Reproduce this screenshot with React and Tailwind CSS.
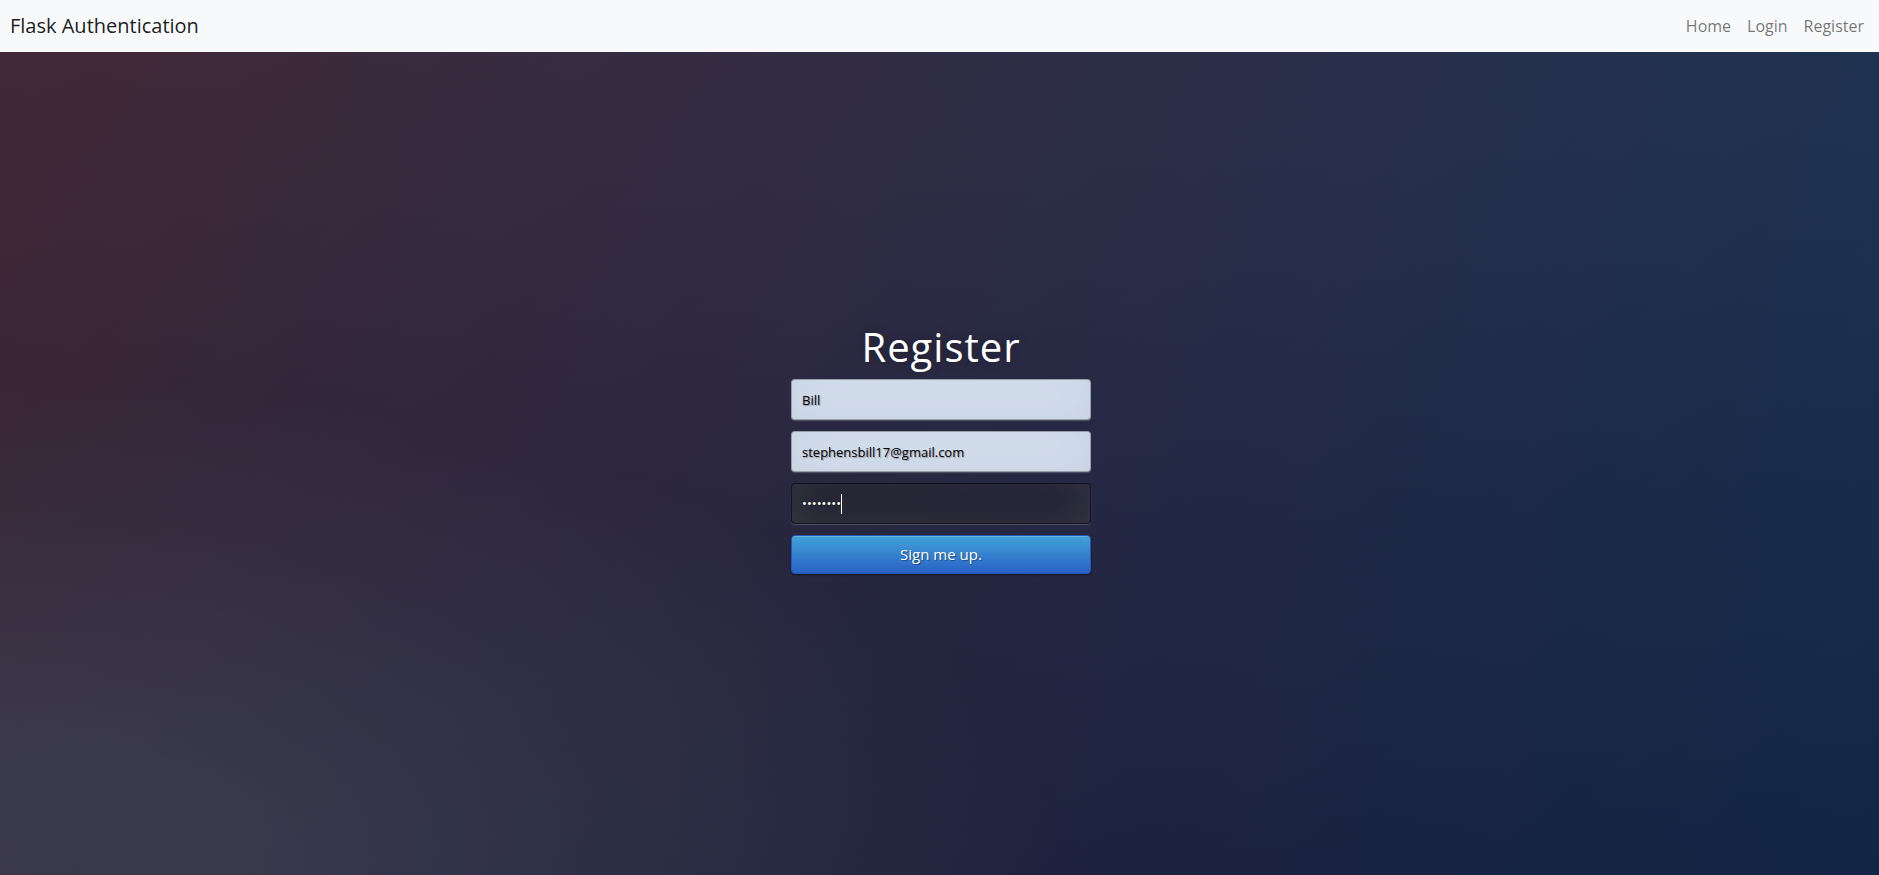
export default function App() {
  const font = { fontFamily: '"Open Sans", "Noto Sans", sans-serif' };
  return (
    <div
      className="min-h-screen flex flex-col bg-[#092756] [background-image:linear-gradient(rgba(5,12,30,.28),rgba(5,12,30,.28)),radial-gradient(ellipse_at_0%_100%,rgba(104,128,138,.4)_10%,rgba(138,114,76,0)_40%),linear-gradient(to_bottom,rgba(57,173,219,.25)_0%,rgba(42,60,87,.4)_100%),linear-gradient(135deg,#670d10_0%,#092756_100%)]"
      style={font}
    >
      <nav className="h-[52px] bg-[#f8f9fa] flex items-center justify-between pl-[10px] pr-[15px]">
        <a className="text-[20px] text-[rgba(0,0,0,0.9)] leading-[30px]">Flask Authentication</a>
        <div className="flex items-center gap-[16px] text-[16px] text-[rgba(0,0,0,0.55)]">
          <a>Home</a>
          <a>Login</a>
          <a>Register</a>
        </div>
      </nav>
      <main className="flex justify-center pt-[271px] pl-[3px]">
        <div className="w-[300px] flex flex-col">
          <h1 className="text-[40px] leading-[48px] text-white text-center tracking-[1px] mb-[8px] [text-shadow:0_0_10px_rgba(0,0,0,0.3)]">
            Register
          </h1>
          <input
            readOnly
            value="Bill"
            className="h-[41px] mb-[11px] px-[10px] rounded-[4px] border border-[rgba(0,0,0,0.3)] bg-[#d8e3f2] text-black text-[13px] outline-none shadow-[inset_0_-5px_45px_rgba(100,110,130,0.15),0_1px_1px_rgba(255,255,255,0.2)] [text-shadow:1px_1px_1px_rgba(0,0,0,0.3)]"
            style={font}
          />
          <input
            readOnly
            value="stephensbill17@gmail.com"
            className="h-[41px] mb-[11px] px-[10px] rounded-[4px] border border-[rgba(0,0,0,0.3)] bg-[#d8e3f2] text-black text-[13px] outline-none shadow-[inset_0_-5px_45px_rgba(100,110,130,0.15),0_1px_1px_rgba(255,255,255,0.2)] [text-shadow:1px_1px_1px_rgba(0,0,0,0.3)]"
            style={font}
          />
          <div className="h-[41px] mb-[11px] px-[10px] rounded-[4px] border border-[rgba(0,0,0,0.3)] bg-[rgba(0,0,0,0.3)] text-white text-[13px] flex items-center shadow-[inset_0_-5px_45px_rgba(100,100,100,0.4),0_1px_1px_rgba(255,255,255,0.2)] [text-shadow:1px_1px_1px_rgba(0,0,0,0.3)]">
            <span>••••••••</span>
            <span className="w-px h-[20px] bg-white" />
          </div>
          <button
            className="h-[39px] rounded-[4px] border border-[#2458b4] bg-[linear-gradient(to_bottom,#42a2d8,#2962c6)] text-white text-[15px] shadow-[inset_0_1px_0_rgba(255,255,255,0.2),0_1px_2px_rgba(0,0,0,0.5)] [text-shadow:1px_1px_1px_rgba(0,0,0,0.4)]"
            style={font}
          >
            Sign me up.
          </button>
        </div>
      </main>
    </div>
  );
}
